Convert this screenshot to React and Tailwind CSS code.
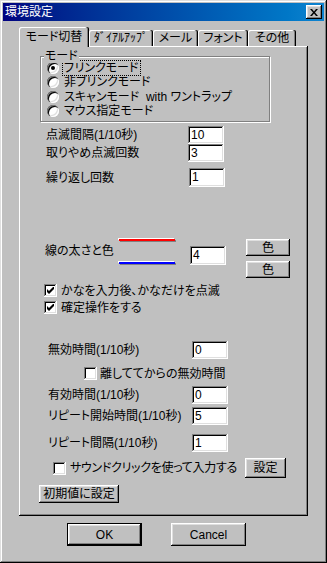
import React from "react";

const raised =
  "shadow-[inset_-1px_-1px_#000,inset_1px_1px_#fff,inset_-2px_-2px_#808080,inset_2px_2px_#dfdfdf]";
const sunken =
  "shadow-[inset_-1px_-1px_#fff,inset_1px_1px_#808080,inset_-2px_-2px_#dfdfdf,inset_2px_2px_#000]";

function Field({ value, className = "" }) {
  return (
    <div className={`w-[36px] h-[18px] bg-white pl-[3px] leading-[18px] ${sunken} ${className}`}>
      {value}
    </div>
  );
}

function Radio({ checked }) {
  return (
    <span className="w-[12px] h-[12px] rounded-full bg-white flex items-center justify-center shrink-0 shadow-[inset_1px_1px_#808080,inset_2px_2px_#000,inset_-1px_-1px_#fff,inset_-2px_-2px_#dfdfdf]">
      {checked && <span className="w-[4px] h-[4px] rounded-full bg-black" />}
    </span>
  );
}

function Check({ checked }) {
  return (
    <span className={`w-[13px] h-[13px] bg-white flex items-center justify-center shrink-0 ${sunken}`}>
      {checked && (
        <svg width="7" height="7" viewBox="0 0 7 7">
          <path d="M0 2 L2 4 L6 0 L7 0 L7 2 L2 7 L0 5 Z" fill="#000" />
        </svg>
      )}
    </span>
  );
}

function Button({ children, className = "" }) {
  return (
    <div className={`bg-[#c0c0c0] flex items-center justify-center ${raised} ${className}`}>
      {children}
    </div>
  );
}

export default function App() {
  return (
    <div className="w-[327px] h-[563px] bg-[#c0c0c0] p-[3px] text-[12px] leading-[14px] text-black font-['Liberation_Sans','Noto_Sans_CJK_JP',sans-serif] [font-feature-settings:'palt'] shadow-[inset_-1px_-1px_#000,inset_1px_1px_#dfdfdf,inset_-2px_-2px_#808080,inset_2px_2px_#fff]">
      {/* title bar */}
      <div className="h-[18px] flex items-center justify-between bg-linear-to-r from-[#000080] to-[#1084d0] pl-[2px] pr-[2px] text-white">
        <span className="text-[12px]">環境設定</span>
        <div className={`w-[16px] h-[14px] bg-[#c0c0c0] flex items-center justify-center ${raised}`}>
          <svg width="8" height="7" viewBox="0 0 8 7">
            <path d="M0 0 H2 L4 2.5 L6 0 H8 L5 3.5 L8 7 H6 L4 4.5 L2 7 H0 L3 3.5 Z" fill="#000" />
          </svg>
        </div>
      </div>

      {/* tabs */}
      <div className="mt-[6px] ml-[16px] flex items-end h-[19px] relative z-10">
        <div className="h-[20px] -mb-[1px] w-[70px] bg-[#c0c0c0] rounded-t-[2px] flex items-center justify-center pb-[1px] shadow-[inset_-1px_0_#000,inset_-2px_0_#808080,inset_1px_1px_#fff]">
          モード切替
        </div>
        <div className="h-[16px] w-[64px] rounded-t-[2px] flex items-center justify-center shadow-[inset_-1px_0_#000,inset_-2px_0_#808080,inset_1px_1px_#fff]">
          ﾀﾞｲｱﾙｱｯﾌﾟ
        </div>
        <div className="h-[16px] w-[45px] rounded-t-[2px] flex items-center justify-center shadow-[inset_-1px_0_#000,inset_-2px_0_#808080,inset_1px_1px_#fff]">
          メール
        </div>
        <div className="h-[16px] w-[50px] rounded-t-[2px] flex items-center justify-center shadow-[inset_-1px_0_#000,inset_-2px_0_#808080,inset_1px_1px_#fff]">
          フォント
        </div>
        <div className="h-[16px] w-[48px] rounded-t-[2px] flex items-center justify-center shadow-[inset_-1px_0_#000,inset_-2px_0_#808080,inset_1px_1px_#fff]">
          その他
        </div>
      </div>

      {/* panel */}
      <div className="ml-[16px] w-[289px] h-[470px] flex flex-col shadow-[inset_-1px_-1px_#000,inset_1px_1px_#fff,inset_-2px_-2px_#808080]">
        {/* mode group */}
        <div className="relative mt-[10px] ml-[21px] w-[230px] h-[66px] border border-[#808080] shadow-[inset_1px_1px_#fff,1px_1px_#fff] pt-[4px] pl-[6px]">
          <span className="absolute -top-[8px] left-[3px] bg-[#c0c0c0] px-[1px]">モード</span>
          <div className="h-[14px] flex items-center gap-[4px]">
            <Radio checked />
            <span className="outline-1 outline-dotted outline-black px-[1px]">ブリンクモード</span>
          </div>
          <div className="h-[14px] flex items-center gap-[4px]">
            <Radio />
            <span className="px-[1px]">非ブリンクモード</span>
          </div>
          <div className="h-[15px] flex items-center gap-[4px]">
            <Radio />
            <span className="px-[1px]">スキャンモード&nbsp; with ワントラップ</span>
          </div>
          <div className="h-[14px] flex items-center gap-[4px]">
            <Radio />
            <span className="px-[1px]">マウス指定モード</span>
          </div>
        </div>

        <div className="mt-[4px] ml-[27px] flex items-center">
          <span className="w-[142px]">点滅間隔(1/10秒)</span>
          <Field value="10" />
        </div>
        <div className="ml-[27px] flex items-center">
          <span className="w-[142px]">取りやめ点滅回数</span>
          <Field value="3" />
        </div>
        <div className="mt-[6px] ml-[27px] flex items-center">
          <span className="w-[143px]">繰り返し回数</span>
          <Field value="1" className="h-[19px]" />
        </div>

        {/* line width and colours */}
        <div className="mt-[52px] ml-[26px] flex items-start h-[39px]">
          <span className="w-[74px] mt-[5px]">線の太さと色</span>
          <div className="w-[56px] flex flex-col">
            <div className="h-[2px] bg-[#ff0000] shadow-[-1px_-1px_#fff,1px_1px_#808080]" />
            <div className="mt-[21px] h-[2px] bg-[#0000ff] shadow-[-1px_-1px_#fff,1px_1px_#808080]" />
          </div>
          <Field value="4" className="ml-[15px] mt-[7px] h-[19px]" />
          <div className="ml-[20px] flex flex-col gap-[5px]">
            <Button className="w-[44px] h-[17px]">色</Button>
            <Button className="w-[44px] h-[17px]">色</Button>
          </div>
        </div>

        <div className="mt-[6px] ml-[25px] flex items-center gap-[4px] h-[13px]">
          <Check checked />
          <span>かなを入力後、かなだけを点滅</span>
        </div>
        <div className="mt-[4px] ml-[25px] flex items-center gap-[4px] h-[13px]">
          <Check checked />
          <span>確定操作をする</span>
        </div>

        <div className="mt-[27px] ml-[29px] flex items-center">
          <span className="w-[144px]">無効時間(1/10秒)</span>
          <Field value="0" />
        </div>
        <div className="mt-[8px] ml-[65px] flex items-center gap-[3px] h-[13px]">
          <Check />
          <span>離しててからの無効時間</span>
        </div>
        <div className="mt-[6px] ml-[29px] flex items-center">
          <span className="w-[144px]">有効時間(1/10秒)</span>
          <Field value="0" />
        </div>
        <div className="mt-[3px] ml-[29px] flex items-center">
          <span className="w-[144px]">リピート開始時間(1/10秒)</span>
          <Field value="5" />
        </div>
        <div className="mt-[9px] ml-[29px] flex items-center">
          <span className="w-[144px]">リピート間隔(1/10秒)</span>
          <Field value="1" />
        </div>

        <div className="mt-[6px] ml-[34px] flex items-center h-[20px]">
          <Check />
          <span className="ml-[4px] w-[175px] shrink-0 whitespace-nowrap tracking-[-0.3px]">
            サウンドクリックを使って入力する
          </span>
          <Button className="w-[41px] h-[20px]">設定</Button>
        </div>

        <Button className="mt-[7px] ml-[20px] w-[80px] h-[18px]">初期値に設定</Button>
      </div>

      {/* dialog buttons */}
      <div className="mt-[7px] ml-[64px] flex">
        <div className="w-[75px] h-[23px] border border-black">
          <Button className="w-full h-full">OK</Button>
        </div>
        <Button className="ml-[29px] w-[75px] h-[23px]">Cancel</Button>
      </div>
    </div>
  );
}
